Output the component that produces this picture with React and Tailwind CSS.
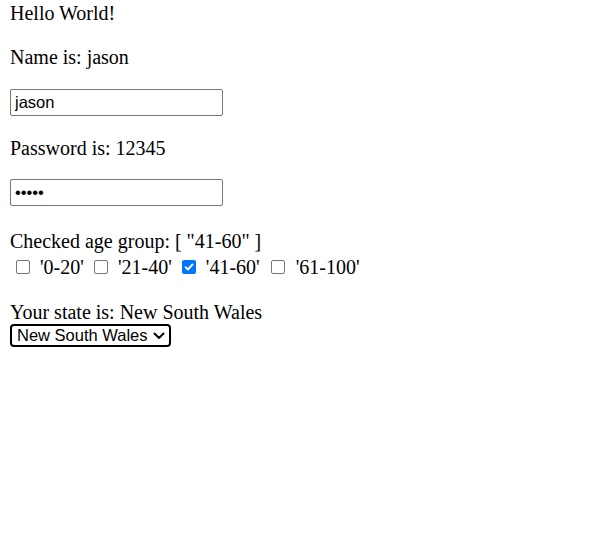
import { useState } from "react";

const AGE_GROUPS = ["0-20", "21-40", "41-60", "61-100"];

function Checkbox({ checked }) {
  if (checked) {
    return (
      <span className="flex h-[14px] w-[14px] items-center justify-center rounded-[2px] bg-[#0075ff]">
        <svg width="10" height="10" viewBox="0 0 10 10" fill="none">
          <path d="M1.6 5.2 L4 7.5 L8.5 2.4" stroke="white" strokeWidth="1.9" strokeLinecap="round" strokeLinejoin="round" />
        </svg>
      </span>
    );
  }
  return <span className="block h-[14px] w-[14px] rounded-[2px] border border-[#767676] bg-white" />;
}

function App() {
  const [name] = useState("jason");
  const [password] = useState("12345");
  const [ages] = useState(["41-60"]);
  const [state] = useState("New South Wales");

  return (
    <div className="flex flex-col items-start pl-[10px] pt-[2px] text-[20px] leading-[23px] text-black [font-family:'Liberation_Serif',serif]">
      <div className="h-[23px]">Hello World!</div>

      <div className="mt-[21px] h-[23px]">Name is: {name}</div>

      <input
        type="text"
        defaultValue={name}
        className="mt-[20px] h-[27px] w-[213px] rounded-[2px] border border-[#767676] bg-white pl-[4px] pr-[3px] text-[16.5px] text-black outline-none [font-family:'Liberation_Sans',Arial,sans-serif]"
      />

      <div className="mt-[21px] h-[23px]">Password is: {password}</div>

      <input
        type="password"
        defaultValue={password}
        className="mt-[19px] h-[27px] w-[213px] rounded-[2px] border border-[#767676] bg-white pl-[4px] pr-[3px] text-[16.5px] text-black outline-none [font-family:'Liberation_Sans',Arial,sans-serif]"
      />

      <div className="mt-[24px] h-[23px]">Checked age group: [ {ages.map((a) => `"${a}"`).join(", ")} ]</div>

      <div className="mt-[3px] flex h-[23px] items-center">
        {AGE_GROUPS.map((g, i) => (
          <div key={g} className="flex items-center">
            <span className={i === 0 ? "ml-[6px] mr-[10px] mt-[-1px]" : i === 3 ? "ml-[11px] mr-[11px] mt-[-1px]" : "ml-[10px] mr-[10px] mt-[-1px]"}>
              <Checkbox checked={ages.includes(g)} />
            </span>
            <span>'{g}'</span>
          </div>
        ))}
      </div>

      <div className="mt-[22px] h-[23px]">Your state is: {state}</div>

      <div className="flex h-[23px] w-[161px] items-center justify-between rounded-[4px] border-2 border-black bg-white pl-[5px] pr-[4px] text-[16.5px] leading-[19px] [font-family:'Liberation_Sans',Arial,sans-serif]">
        <span>{state}</span>
        <svg width="12" height="8" viewBox="0 0 12 8" fill="none">
          <path d="M1.5 1.5 L6 6 L10.5 1.5" stroke="black" strokeWidth="2" strokeLinecap="round" strokeLinejoin="round" />
        </svg>
      </div>
    </div>
  );
}

export default App;
